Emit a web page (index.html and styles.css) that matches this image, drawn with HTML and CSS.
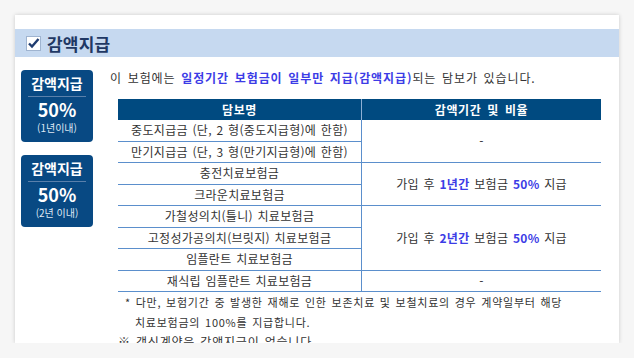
FILE: index.html
```html
<!DOCTYPE html>
<html lang="ko">
<head>
<meta charset="utf-8">
<link rel="stylesheet" href="styles.css">
</head>
<body>
<div class="card">
  <div class="band">
    <svg class="chk" width="15" height="15" viewBox="0 0 15 15">
      <rect x="0.5" y="0.5" width="14" height="14" fill="#fff" stroke="#9fb4d0"/>
      <path d="M3 7.5 L6 10.5 L12.5 3" fill="none" stroke="#1f3c70" stroke-width="2.4"/>
    </svg>
    <span class="band-title">감액지급</span>
  </div>
  <div class="content">
    <div class="badges">
      <div class="badge">
        <div class="b-title">감액지급</div>
        <div class="b-pct">50%</div>
        <div class="b-sub">(1년이내)</div>
      </div>
      <div class="badge">
        <div class="b-title">감액지급</div>
        <div class="b-pct">50%</div>
        <div class="b-sub">(2년 이내)</div>
      </div>
    </div>
    <div class="main">
      <p class="intro">이 보험에는 <span class="hl">일정기간 보험금이 일부만 지급(감액지급)</span>되는 담보가 있습니다.</p>
      <table class="tbl">
        <thead>
          <tr><th>담보명</th><th>감액기간 및 비율</th></tr>
        </thead>
        <tbody>
          <tr><td>중도지급금 (단, 2 형(중도지급형)에 한함)</td><td rowspan="2">-</td></tr>
          <tr><td>만기지급금 (단, 3 형(만기지급형)에 한함)</td></tr>
          <tr><td>충전치료보험금</td><td rowspan="2">가입 후 <b class="hl">1년간</b> 보험금 <b class="hl">50%</b> 지급</td></tr>
          <tr><td>크라운치료보험금</td></tr>
          <tr><td>가철성의치(틀니) 치료보험금</td><td rowspan="3">가입 후 <b class="hl">2년간</b> 보험금 <b class="hl">50%</b> 지급</td></tr>
          <tr><td>고정성가공의치(브릿지) 치료보험금</td></tr>
          <tr><td>임플란트 치료보험금</td></tr>
          <tr><td>재식립 임플란트 치료보험금</td><td>-</td></tr>
        </tbody>
      </table>
      <p class="note">* 다만, 보험기간 중 발생한 재해로 인한 보존치료 및 보철치료의 경우 계약일부터 해당<br><span class="indent">치료보험금의 100%를 지급합니다.</span></p>
      <p class="note2">※ 갱신계약은 감액지급이 없습니다</p>
    </div>
  </div>
</div>
</body>
</html>
```
FILE: styles.css
```css
html, body {
  margin: 0;
  padding: 0;
  background: #f6f6f6;
  font-family: "Noto Sans CJK KR", "Noto Sans", sans-serif;
  color: #333;
}
.card {
  margin: 15px 0 0 15px;
  width: 604px;
  height: 328px;
  background: #fff;
  box-shadow: 0 0 4px rgba(0,0,0,0.18);
  overflow: hidden;
  box-sizing: border-box;
  padding-top: 14px;
}
.band {
  height: 28px;
  background: #c6d9f0;
  display: flex;
  align-items: center;
  padding-left: 11px;
  gap: 6px;
}
.chk { display: block; }
.band-title {
  font-size: 17px;
  font-weight: bold;
  color: #1f3864;
  letter-spacing: 0.2px;
}
.content {
  display: flex;
  padding: 13px 0 0 6px;
}
.badges {
  width: 72px;
  display: flex;
  flex-direction: column;
  gap: 13px;
}
.badge {
  width: 72px;
  height: 72px;
  background: #084983;
  border-radius: 4px;
  color: #fff;
  text-align: center;
  box-sizing: border-box;
  padding-top: 5px;
}
.b-title {
  font-size: 14px;
  font-weight: bold;
  line-height: 17px;
  margin: 0 7px;
  padding-bottom: 4px;
  border-bottom: 1px solid #5a80ab;
}
.b-pct {
  font-size: 18px;
  font-weight: bold;
  line-height: 20px;
  margin-top: 2px;
}
.b-sub {
  font-size: 10px;
  line-height: 13px;
  margin-top: 2px;
  color: #dfe8f3;
}
.main {
  margin-left: 17px;
  width: 500px;
}
.intro {
  margin: 0;
  font-size: 12px;
  line-height: 16px;
  letter-spacing: 0.9px;
  word-spacing: 1.5px;
}
.hl { color: #3c3ce6; font-weight: bold; }
.tbl {
  margin: 13px 0 0 8px;
  width: 483px;
  border-collapse: collapse;
  font-size: 12px;
  letter-spacing: 0.3px;
  word-spacing: 1px;
}
.tbl th {
  background: #004a80;
  color: #fff;
  font-weight: bold;
  height: 21px;
  padding: 0;
  border-right: 1px solid #8fb0d4;
  width: 243px;
  line-height: 16px;
  letter-spacing: 0.6px;
  word-spacing: 2px;
}
.tbl th:last-child { border-right: none; width: auto; }
.tbl td {
  text-align: center;
  padding: 0;
  height: 20.5px;
  line-height: 16px;
  border-bottom: 1px solid #5b8fcc;
  border-right: 1px solid #5b8fcc;
  color: #333;
}
.tbl td[rowspan], .tbl tr:last-child td:last-child { border-right: none; }
.note {
  margin: 0 0 0 15px;
  font-size: 11px;
  line-height: 20px;
  letter-spacing: 0.75px;
  word-spacing: 1px;
}
.indent { padding-left: 10px; }
.note2 {
  margin: 0 0 0 8px;
  font-size: 12px;
  line-height: 20px;
  letter-spacing: 0.8px;
  word-spacing: 1px;
}
```
